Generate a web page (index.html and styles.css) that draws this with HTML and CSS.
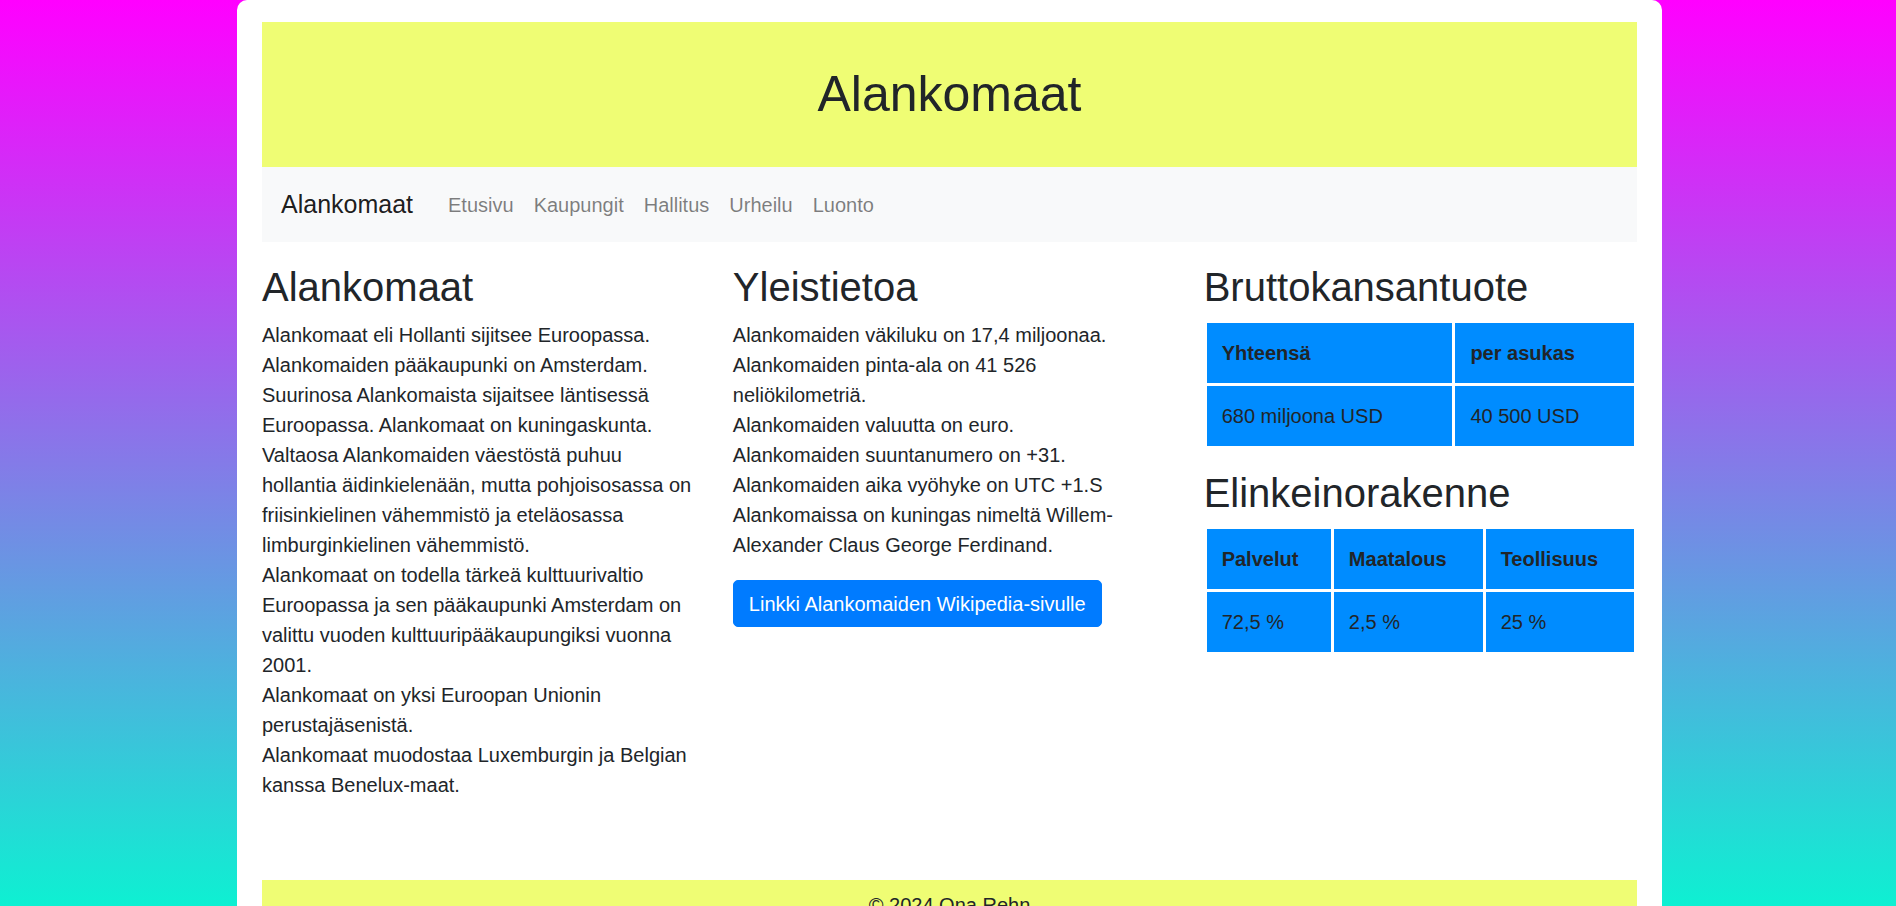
FILE: index.html
```html
<!DOCTYPE html>
<html lang="fi">
<head>
<meta charset="utf-8">
<title>Alankomaat</title>
<link rel="stylesheet" href="styles.css">
</head>
<body>
<div class="page">
  <header class="banner">
    <h1>Alankomaat</h1>
  </header>
  <nav class="navbar">
    <a class="brand" href="#">Alankomaat</a>
    <ul class="nav-links">
      <li><a href="#">Etusivu</a></li>
      <li><a href="#">Kaupungit</a></li>
      <li><a href="#">Hallitus</a></li>
      <li><a href="#">Urheilu</a></li>
      <li><a href="#">Luonto</a></li>
    </ul>
  </nav>
  <main class="row">
    <section class="col">
      <h2>Alankomaat</h2>
      <p>Alankomaat eli Hollanti sijitsee Euroopassa.<br>
      Alankomaiden pääkaupunki on Amsterdam.<br>
      Suurinosa Alankomaista sijaitsee läntisessä Euroopassa. Alankomaat on kuningaskunta.<br>
      Valtaosa Alankomaiden väestöstä puhuu hollantia äidinkielenään, mutta pohjoisosassa on friisinkielinen vähemmistö ja eteläosassa limburginkielinen vähemmistö.<br>
      Alankomaat on todella tärkeä kulttuurivaltio Euroopassa ja sen pääkaupunki Amsterdam on valittu vuoden kulttuuripääkaupungiksi vuonna 2001.<br>
      Alankomaat on yksi Euroopan Unionin perustajäsenistä.<br>
      Alankomaat muodostaa Luxemburgin ja Belgian kanssa Benelux-maat.</p>
    </section>
    <section class="col">
      <h2>Yleistietoa</h2>
      <p>Alankomaiden väkiluku on 17,4 miljoonaa.<br>
      Alankomaiden pinta-ala on 41 526 neliökilometriä.<br>
      Alankomaiden valuutta on euro.<br>
      Alankomaiden suuntanumero on +31.<br>
      Alankomaiden aika vyöhyke on UTC +1.S<br>
      Alankomaissa on kuningas nimeltä Willem-Alexander Claus George Ferdinand.</p>
      <a class="btn" href="#">Linkki Alankomaiden Wikipedia-sivulle</a>
    </section>
    <section class="col">
      <h2>Bruttokansantuote</h2>
      <table class="data">
        <tr><th>Yhteensä</th><th>per asukas</th></tr>
        <tr><td>680 miljoona USD</td><td>40 500 USD</td></tr>
      </table>
      <h2>Elinkeinorakenne</h2>
      <table class="data">
        <tr><th>Palvelut</th><th>Maatalous</th><th>Teollisuus</th></tr>
        <tr><td>72,5 %</td><td>2,5 %</td><td>25 %</td></tr>
      </table>
    </section>
  </main>
  <footer class="footer">
    <p>© 2024 Ona Rehn</p>
  </footer>
</div>
</body>
</html>
```
FILE: styles.css
```css
html {
  background: linear-gradient(180deg, #ff00ff 0%, #0ef0d2 100%) fixed;
  min-height: 100%;
}

body {
  margin: 0;
  font-family: "Liberation Sans", Arial, sans-serif;
  font-size: 20px;
  line-height: 1.5;
  color: #212529;
}

.page {
  box-sizing: border-box;
  width: 1425px;
  margin-left: calc(50% - 711px);
  background: #ffffff;
  border-radius: 10px 10px 0 0;
  padding: 22px 25px 25px;
}

.banner {
  background: #effd74;
  text-align: center;
  padding: 42px 0 43px;
}

.banner h1 {
  margin: 0;
  font-size: 50px;
  font-weight: 400;
  line-height: 1.2;
}

.navbar {
  display: flex;
  align-items: center;
  height: 75px;
  padding: 0 20px 0 19px;
  background: #f8f9fa;
}

.brand {
  font-size: 25px;
  line-height: 1.5;
  color: rgba(0, 0, 0, 0.9);
  text-decoration: none;
  margin-right: 25px;
}

.nav-links {
  display: flex;
  list-style: none;
  margin: 0;
  padding: 0;
}

.nav-links a {
  display: block;
  padding: 0 10px;
  color: rgba(0, 0, 0, 0.5);
  text-decoration: none;
}

.row {
  display: grid;
  grid-template-columns: repeat(3, 1fr);
  column-gap: 37.5px;
  padding-top: 21px;
}

.col h2 {
  margin: 0 0 9px;
  font-size: 40px;
  font-weight: 400;
  line-height: 1.2;
}

.col p {
  margin: 0 0 20px;
}

.btn {
  display: inline-block;
  background: #007bff;
  color: #ffffff;
  border: 1.25px solid #007bff;
  border-radius: 5px;
  padding: 7.5px 15px;
  line-height: 30px;
  text-decoration: none;
}

.data {
  width: 100%;
  border-collapse: separate;
  border-spacing: 3px;
  margin: 0 0 20px;
}

.data th,
.data td {
  background: #008cff;
  padding: 15px;
  text-align: left;
  vertical-align: top;
  line-height: 30px;
}

.data th {
  font-weight: 700;
}

.footer {
  margin-top: 60px;
  background: #effd74;
  text-align: center;
  padding: 10px;
}

.footer p {
  margin: 0;
}
```
